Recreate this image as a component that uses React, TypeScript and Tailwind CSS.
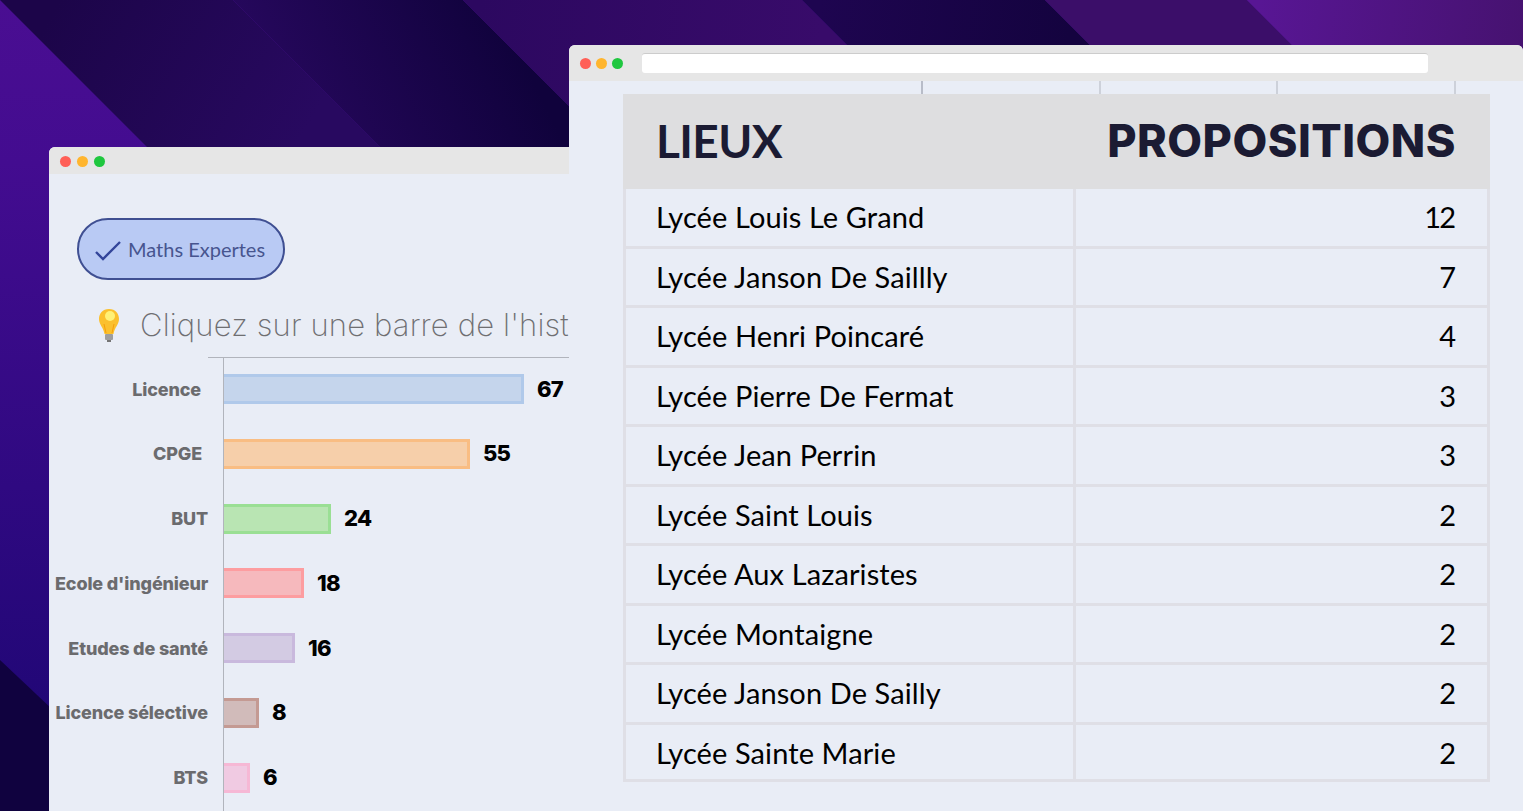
const bars = [
  { label: 'Licence', value: 67, width: 300, fill: 'bg-[#c5d5ec] border-[#b0c9ea]', labelPad: 'pr-[22px]' },
  { label: 'CPGE', value: 55, width: 246, fill: 'bg-[#f6cfaa] border-[#f9bd83]', labelPad: 'pr-[21px]' },
  { label: 'BUT', value: 24, width: 107, fill: 'bg-[#b9e5b3] border-[#9adf94]', labelPad: 'pr-[15px]' },
  { label: "Ecole d'ingénieur", value: 18, width: 80, fill: 'bg-[#f6b9bd] border-[#fd9da0]', labelPad: 'pr-[15px]' },
  { label: 'Etudes de santé', value: 16, width: 71, fill: 'bg-[#d3cbe3] border-[#c9b9dd]', labelPad: 'pr-[15px]' },
  { label: 'Licence sélective', value: 8, width: 35, fill: 'bg-[#d1bbba] border-[#c49a93]', labelPad: 'pr-[15px]' },
  { label: 'BTS', value: 6, width: 26, fill: 'bg-[#f0cae2] border-[#f6b8d5]', labelPad: 'pr-[15px]' },
];

const places = [
  ['Lycée Louis Le Grand', 12],
  ['Lycée Janson De Saillly', 7],
  ['Lycée Henri Poincaré', 4],
  ['Lycée Pierre De Fermat', 3],
  ['Lycée Jean Perrin', 3],
  ['Lycée Saint Louis', 2],
  ['Lycée Aux Lazaristes', 2],
  ['Lycée Montaigne', 2],
  ['Lycée Janson De Sailly', 2],
  ['Lycée Sainte Marie', 2],
] as const;

function Dots({ wide }: { wide?: boolean }) {
  return (
    <div className={wide ? 'flex gap-[6px]' : 'flex gap-[5px]'}>
      <span className="w-[11px] h-[11px] rounded-full bg-[#ff5f57]" />
      <span className="w-[11px] h-[11px] rounded-full bg-[#ffb52e]" />
      <span className="w-[11px] h-[11px] rounded-full bg-[#1fc73f]" />
    </div>
  );
}

function Backdrop() {
  return (
    <svg className="absolute inset-0 w-full h-full" viewBox="0 0 1523 811" preserveAspectRatio="none">
      <defs>
        <linearGradient id="left" x1="0" y1="0" x2="0" y2="1">
          <stop offset="0" stopColor="#4a0e92" />
          <stop offset="0.2" stopColor="#430c90" />
          <stop offset="1" stopColor="#1b0672" />
        </linearGradient>
        <linearGradient id="band1" gradientUnits="userSpaceOnUse" x1="60" y1="0" x2="300" y2="140">
          <stop offset="0" stopColor="#1c0549" />
          <stop offset="1" stopColor="#280960" />
        </linearGradient>
        <linearGradient id="band2" gradientUnits="userSpaceOnUse" x1="270" y1="120" x2="500" y2="10">
          <stop offset="0" stopColor="#27085e" />
          <stop offset="1" stopColor="#10023c" />
        </linearGradient>
        <linearGradient id="band3" gradientUnits="userSpaceOnUse" x1="480" y1="0" x2="820" y2="40">
          <stop offset="0" stopColor="#2c0860" />
          <stop offset="1" stopColor="#380b6a" />
        </linearGradient>
        <linearGradient id="band4" gradientUnits="userSpaceOnUse" x1="820" y1="0" x2="1070" y2="30">
          <stop offset="0" stopColor="#1e0550" />
          <stop offset="1" stopColor="#14033f" />
        </linearGradient>
        <linearGradient id="band6" gradientUnits="userSpaceOnUse" x1="1260" y1="0" x2="1523" y2="40">
          <stop offset="0" stopColor="#581694" />
          <stop offset="1" stopColor="#461270" />
        </linearGradient>
      </defs>
      <rect width="1523" height="811" fill="url(#left)" />
      <polygon points="0,0 233,0 1044,811 811,811" fill="url(#band1)" />
      <polygon points="233,0 463,0 1274,811 1044,811" fill="url(#band2)" />
      <polygon points="463,0 802,0 1613,811 1274,811" fill="url(#band3)" />
      <polygon points="802,0 1045,0 1856,811 1613,811" fill="url(#band4)" />
      <polygon points="1045,0 1247,0 2058,811 1856,811" fill="#3b0e69" />
      <polygon points="1247,0 1523,0 1523,811 2058,811" fill="url(#band6)" />
      <polygon points="0,660 160,811 0,811" fill="#10023f" />
    </svg>
  );
}

function ChartWindow() {
  return (
    <div className="absolute left-[49px] top-[147px] w-[520px] h-[664px] overflow-hidden rounded-tl-[6px] bg-[#e9edf6] flex flex-col">
      <div className="h-[27px] shrink-0 bg-[#e6e6e6] flex items-center pl-[11px] pt-[2px]">
        <Dots wide />
      </div>
      <div className="pl-[28px] pt-[44px]">
        <div className="w-[208px] h-[62px] rounded-full border-[2.5px] border-[#3f4f92] bg-[#b9caf4] flex items-center gap-[6px] pl-[15px]">
          <svg className="w-[28px] h-[20px] mt-[3px]" viewBox="0 0 28 20" fill="none">
            <polyline points="2,11 9,18 26,1" stroke="#33459a" strokeWidth="2.400" />
          </svg>
          <span className="font-['Lato',sans-serif] text-[20px] text-[#47558f]">Maths Expertes</span>
        </div>
      </div>
      <div className="flex items-center pl-[48px] pt-[24px] h-[66px] whitespace-nowrap">
        <svg className="w-[24px] h-[34px] shrink-0" viewBox="0 0 24 34">
          <path d="M12 1C5.500 1 2 5.800 2 11c0 5.500 4.500 8.500 5.500 15h9C17.500 19.500 22 16.500 22 11 22 5.800 18.500 1 12 1z" fill="#fbc02d" />
          <circle cx="13" cy="8" r="5" fill="#fff176" />
          <path d="M9 25l-2-9M15 25l2-9" stroke="#f59e0b" strokeWidth="1" fill="none" />
          <rect x="8" y="26" width="8" height="6" rx="1" fill="#9e9e9e" />
          <rect x="10" y="32" width="4" height="2" fill="#757575" />
        </svg>
        <span className="ml-[19px] font-['Inter',sans-serif] font-extralight text-[31px] tracking-[0.15px] text-[#6f6f72]">
          Cliquez sur une barre de l'hist
        </span>
      </div>
      <div className="pl-[159px] pt-[11px]">
        <div className="h-px bg-[#b1b4bc]" />
      </div>
      <div className="flex flex-col ml-[6px] pt-[16px] gap-[34.8px] relative">
        <div className="absolute left-[168px] top-0 w-px h-[460px] bg-[#b1b4bc]" />
        {bars.map(b => (
          <div key={b.label} className="flex items-center h-[30px]">
            <div className={`w-[168px] shrink-0 text-right whitespace-nowrap font-['Inter',sans-serif] font-extrabold text-[18px] tracking-[-0.15px] text-[#6b6b6e] ${b.labelPad}`}>
              {b.label}
            </div>
            <div className={`h-[30px] ml-px border-[3px] border-l-0 ${b.fill}`} style={{ width: b.width }} />
            <div className="ml-[13px] font-['Inter',sans-serif] font-extrabold text-[22px] tracking-[-0.8px] text-black">{b.value}</div>
          </div>
        ))}
      </div>
    </div>
  );
}

function TableWindow() {
  return (
    <div className="absolute left-[569px] top-[45px] right-0 bottom-0 rounded-t-[6px] overflow-hidden bg-[#e9edf6] flex flex-col">
      <div className="h-[36px] shrink-0 bg-[#e6e6e6] flex items-center gap-[19px] pl-[11px] pr-[95px]">
        <Dots />
        <div className="flex-1 h-[20px] rounded-[3px] bg-white border-t border-[#cccccc]" />
      </div>
      <div className="h-[13px] shrink-0 flex pl-[352px]">
        <div className="w-[178px] border-l-2 border-[#b8bcc8]" />
        <div className="w-[177px] border-l-2 border-[#cdd1da]" />
        <div className="w-[178px] border-l-2 border-[#cdd1da]" />
        <div className="w-[10px] border-l-2 border-[#cdd1da]" />
      </div>
      <div className="ml-[54px] mr-[33px] flex flex-col border-x-[3px] border-b-[3px] border-[#dfdfe6]">
        <div className="h-[95px] -mx-[3px] bg-[#dedee0] flex items-center justify-between pl-[33px] pr-[34px] pb-[2px] text-[#1b1b33]">
          <span className="font-['Lato',sans-serif] font-bold text-[46px] tracking-[-0.6px]">LIEUX</span>
          <span className="font-['Inter',sans-serif] font-extrabold text-[45px] tracking-[0.5px]">PROPOSITIONS</span>
        </div>
        {places.map(([name, count], i) => (
          <div key={name} className={`flex text-[29px] font-['Lato',sans-serif] text-black ${i < places.length - 1 ? 'h-[59.5px] border-b-[3px] border-[#dfdfe6]' : 'h-[54px]'}`}>
            <div className={`w-[450px] shrink-0 flex items-center pl-[30px] pb-[1px] tracking-[0.1px] border-r-[3px] border-[#dfdfe6] ${i < places.length - 1 ? '' : 'pt-[3px]'}`}>{name}</div>
            <div className={`flex-1 flex items-center justify-end pb-[1px] ${i < places.length - 1 ? '' : 'pt-[3px]'} ${count > 9 ? 'pr-[33px] tracking-[-2px]' : 'pr-[31px]'}`}>{count}</div>
          </div>
        ))}
      </div>
    </div>
  );
}

export default function App() {
  return (
    <div className="relative w-[1523px] h-[811px] overflow-hidden bg-[#2e0a62]">
      <Backdrop />
      <ChartWindow />
      <TableWindow />
    </div>
  );
}
